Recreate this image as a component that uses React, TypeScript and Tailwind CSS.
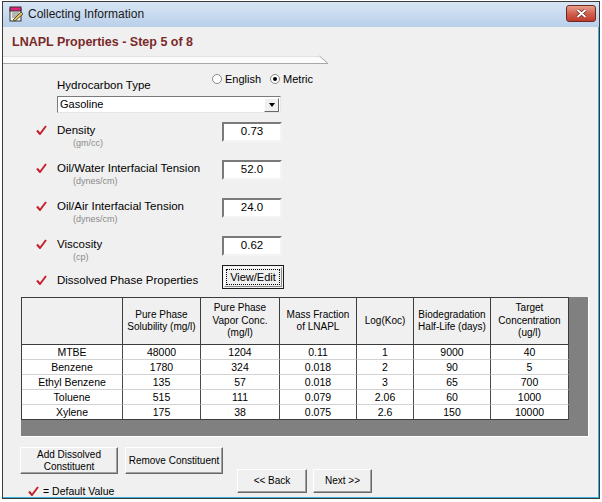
import React from 'react';

const rows = [
  ['MTBE', '48000', '1204', '0.11', '1', '9000', '40'],
  ['Benzene', '1780', '324', '0.018', '2', '90', '5'],
  ['Ethyl Benzene', '135', '57', '0.018', '3', '65', '700'],
  ['Toluene', '515', '111', '0.079', '2.06', '60', '1000'],
  ['Xylene', '175', '38', '0.075', '2.6', '150', '10000'],
];

const headers = [
  [],
  ['Pure Phase', 'Solubility (mg/l)'],
  ['Pure Phase', 'Vapor Conc.', '(mg/l)'],
  ['Mass Fraction', 'of LNAPL'],
  ['Log(Koc)'],
  ['Biodegradation', 'Half-Life (days)'],
  ['Target', 'Concentration', '(ug/l)'],
];

const props = [
  { label: 'Density', unit: '(gm/cc)', value: '0.73' },
  { label: 'Oil/Water Interfacial Tension', unit: '(dynes/cm)', value: '52.0' },
  { label: 'Oil/Air Interfacial Tension', unit: '(dynes/cm)', value: '24.0' },
  { label: 'Viscosity', unit: '(cp)', value: '0.62' },
];

function Check() {
  return (
    <svg width="11" height="10" viewBox="0 0 11 10" className="block">
      <path d="M1 5.5 L4 9 L10 1" fill="none" stroke="#c8202a" strokeWidth="2" strokeLinejoin="round" />
    </svg>
  );
}

function Radio({ checked, label }: { checked?: boolean; label: string }) {
  return (
    <div className="flex items-center gap-[3px]">
      <span className="w-[10px] h-[10px] rounded-full border border-[#8a8a8a] bg-white flex items-center justify-center">
        {checked && <span className="w-[4px] h-[4px] rounded-full bg-black" />}
      </span>
      <span className="text-[11px] leading-[14px] text-black">{label}</span>
    </div>
  );
}

function WinButton({ children, className }: { children: React.ReactNode; className: string }) {
  return (
    <div
      className={
        'flex items-center justify-center text-center whitespace-nowrap text-[10px] leading-[12px] text-black bg-[#f0f0f0] border border-t-white border-l-white border-r-[#696969] border-b-[#696969] shadow-[inset_-1px_-1px_0_#a0a0a0] ' +
        className
      }
    >
      {children}
    </div>
  );
}

export default function App() {
  return (
    <div className="w-[602px] h-[502px] bg-white overflow-hidden font-['Liberation_Sans',Arial,sans-serif]">
      <div className="mt-[1px] ml-[2px] w-[598px] h-[498px] border border-[#3a3a3a] flex flex-col">
        {/* title bar */}
        <div className="h-[25px] flex items-start bg-gradient-to-b from-[#d8e6f5] to-[#b9cfe9]">
          <svg width="16" height="16" viewBox="0 0 16 16" className="mt-[4px] ml-[5px]">
            <rect x="2" y="3" width="11" height="12" fill="#f4f4f4" stroke="#333" strokeWidth="1" />
            <rect x="2" y="1" width="11" height="4" fill="#e0227a" stroke="#333" strokeWidth="1" />
            <path d="M4 7h7M4 9h7M4 11h5" stroke="#777" strokeWidth="1" />
            <path d="M5 14 L13 6 L15 8 L7 15 Z" fill="#e8c84a" stroke="#333" strokeWidth="0.8" />
          </svg>
          <span className="ml-[4px] mt-[5px] text-[12px] leading-[15px] text-[#1a1a1a]">Collecting Information</span>
          <div className="ml-auto mr-[3px] mt-[3px] w-[30px] h-[17px] rounded-[3px] border border-[#6e2a22] bg-gradient-to-b from-[#e6a08e] via-[#d0614f] to-[#c0392b] flex items-center justify-center">
            <svg width="11" height="9" viewBox="0 0 11 9">
              <path d="M1.5 1 L9.5 8 M9.5 1 L1.5 8" stroke="#5a1a14" strokeWidth="3.2" />
              <path d="M1.5 1 L9.5 8 M9.5 1 L1.5 8" stroke="#fff" strokeWidth="2" />
            </svg>
          </div>
        </div>

        {/* client area */}
        <div className="flex-1 bg-[#f0f0f0] border-r border-b border-[#3ab3dc] flex flex-col">
          <div className="ml-[9px] mt-[7px] text-[12.5px] leading-[16px] font-bold text-[#7a2a2a]">
            LNAPL Properties - Step 5 of 8
          </div>
          <svg width="328" height="9" viewBox="0 0 328 9" className="mt-[5px] block">
            <polygon points="0,1 317,1 325,8 0,8" fill="#fbfbfb" />
            <path d="M0 1.5 H317" stroke="#e2e2e2" strokeWidth="1" />
            <path d="M316.5 1 L325 8.5 M0 8.5 H325" stroke="#a8a8a8" strokeWidth="1" />
          </svg>

          {/* hydrocarbon type */}
          <div className="ml-[54px] mt-[9px] w-[256px]">
            <div className="flex items-start justify-between">
              <span className="pt-[5px] text-[11.5px] leading-[14px] text-black">Hydrocarbon Type</span>
              <div className="flex gap-[9px] h-[14px] -mt-[1px]">
                <Radio label="English" />
                <Radio checked label="Metric" />
              </div>
            </div>
            <div className="mt-[4px] w-[224px] h-[17px] bg-white border border-t-[#7a7a7a] border-l-[#7a7a7a] border-r-[#e6e6e6] border-b-[#e6e6e6] flex items-center">
              <span className="pl-[2px] text-[11px] leading-[13px] text-black flex-1">Gasoline</span>
              <div className="w-[15px] h-[14px] mr-[1px] bg-[#f0f0f0] border border-t-white border-l-white border-r-[#696969] border-b-[#696969] flex items-center justify-center">
                <span className="w-0 h-0 border-l-[3.5px] border-r-[3.5px] border-t-[4px] border-l-transparent border-r-transparent border-t-black" />
              </div>
            </div>
          </div>

          {/* properties */}
          <div className="mt-[9px] pl-[33px] flex flex-col">
            {props.map((p) => (
              <div key={p.label} className="h-[38px] flex items-start">
                <div className="w-[21px] pt-[3px]">
                  <Check />
                </div>
                <div className="w-[165px] pt-[1px]">
                  <div className="text-[11.5px] leading-[14px] text-black">{p.label}</div>
                  <div className="pl-[16px] mt-[1px] text-[9px] leading-[11px] text-[#8a8a8a]">{p.unit}</div>
                </div>
                <div className="w-[60px] h-[20px] bg-white border-2 border-t-[#7a7a7a] border-l-[#7a7a7a] border-r-[#f4f4f4] border-b-[#f4f4f4] flex items-center justify-center text-[11.5px] text-black">
                  {p.value}
                </div>
              </div>
            ))}
            <div className="h-[24px] flex items-start -mt-[9px]">
              <div className="w-[21px] pt-[10px]">
                <Check />
              </div>
              <div className="w-[165px] pt-[8px] text-[11.5px] leading-[14px] text-black">Dissolved Phase Properties</div>
              <div className="w-[62px] h-[24px] border border-[#1a1a1a] bg-[#f0f0f0] p-[1px]">
                <div className="w-full h-full border border-t-white border-l-white border-r-[#8a8a8a] border-b-[#8a8a8a] p-[1px]">
                  <div className="w-full h-full border border-dotted border-black flex items-center justify-center text-[11px] text-black">
                    View/Edit
                  </div>
                </div>
              </div>
            </div>
          </div>

          {/* table panel */}
          <div className="ml-[18px] mt-[8px] w-[568px] h-[140px] bg-[#808080] border-r border-b border-white">
            <div className="w-[548px] border-l border-t border-[#3c3c3c] grid grid-cols-[101px_78px_79px_77px_57px_77px_78px]">
              {headers.map((h, i) => (
                <div
                  key={i}
                  className="h-[47px] bg-[#f0f0f0] border-r border-b border-[#3c3c3c] flex flex-col items-center justify-center text-[10px] leading-[12.5px] text-black text-center"
                >
                  {h.map((line) => (
                    <span key={line}>{line}</span>
                  ))}
                </div>
              ))}
              {rows.map((r, ri) =>
                r.map((c, ci) => (
                  <div
                    key={ri + '-' + ci}
                    className={
                      'h-[15px] bg-white border-r border-r-[#4a4a4a] border-b text-[10.5px] leading-[14px] text-black text-center ' +
                      (ri === rows.length - 1 ? 'border-b-[#3c3c3c]' : 'border-b-[#d2d2d2]')
                    }
                  >
                    {c}
                  </div>
                ))
              )}
            </div>
          </div>

          {/* bottom buttons */}
          <div className="ml-[17px] mt-[10px] flex items-start">
            <div className="flex flex-col">
              <div className="flex gap-[7px]">
                <WinButton className="w-[98px] h-[27px]">
                  Add Dissolved
                  <br />
                  Constituent
                </WinButton>
                <WinButton className="w-[98px] h-[27px]">Remove Constituent</WinButton>
              </div>
              <div className="ml-[8px] mt-[11px] flex items-center gap-[4px]">
                <Check />
                <span className="text-[10.5px] leading-[12px] text-black">= Default Value</span>
              </div>
            </div>
            <div className="ml-[14px] mt-[22px] flex gap-[6px]">
              <WinButton className="w-[70px] h-[24px]">&lt;&lt; Back</WinButton>
              <WinButton className="w-[59px] h-[24px]">Next &gt;&gt;</WinButton>
            </div>
          </div>
        </div>
      </div>
    </div>
  );
}
